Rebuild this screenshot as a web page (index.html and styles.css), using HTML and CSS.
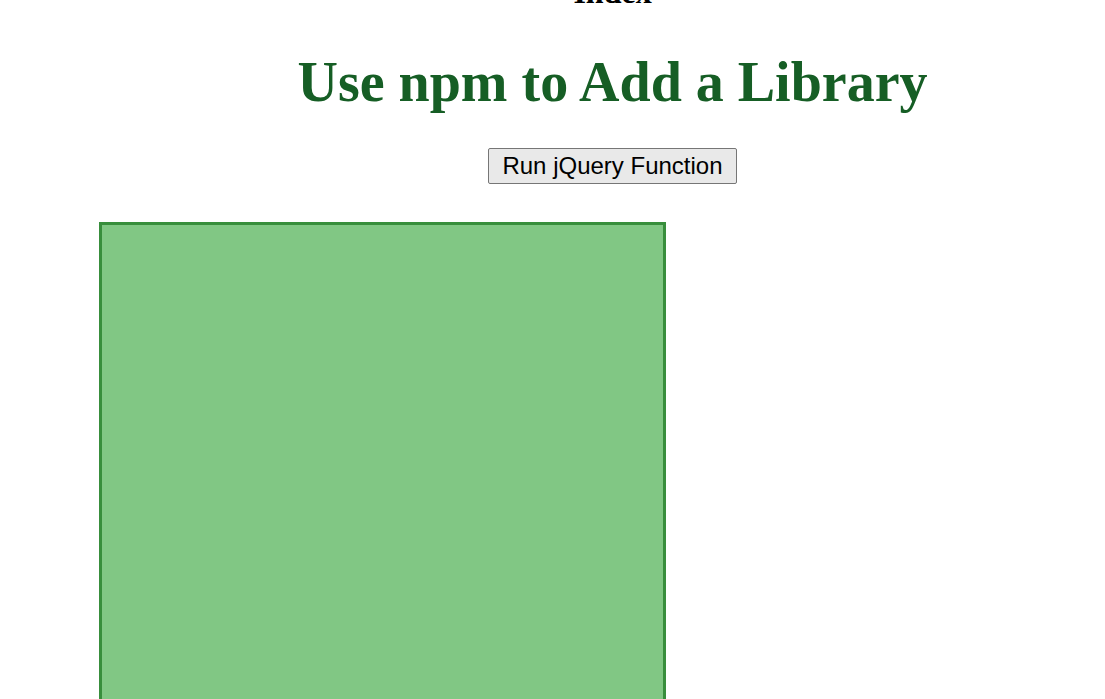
FILE: index.html
```html
<!DOCTYPE html>
<html>
<head>
<meta charset="utf-8">
<title>Index</title>
<link rel="stylesheet" href="styles.css">
</head>
<body>
<div class="page">
  <header class="head">
    <h2 class="title">Index</h2>
    <h1 class="heading">Use npm to Add a Library</h1>
    <button class="run" type="button">Run jQuery Function</button>
  </header>
  <div class="box"></div>
</div>
</body>
</html>
```
FILE: styles.css
```css
html, body {
  margin: 0;
  padding: 0;
  background: #ffffff;
  overflow: hidden;
}
body {
  font-family: "Liberation Serif", "Times New Roman", serif;
}
.page {
  margin-top: -26px;
}
.head {
  padding-left: 120px;
  text-align: center;
}
.title {
  margin: 0;
  font-size: 32px;
  font-weight: bold;
  line-height: 36px;
  color: #000;
}
.heading {
  margin: 40px 0 0;
  font-size: 56px;
  font-weight: bold;
  line-height: 64px;
  color: #165e25;
}
.run {
  margin-top: 34px;
  font-family: "Liberation Sans", Arial, sans-serif;
  font-size: 24px;
  line-height: 28px;
  padding: 3px 13px 3px;
  border: 1px solid #767676;
  border-radius: 2px;
  background: #e9e9e9;
  color: #000;
}
.box {
  margin: 38px 0 0 99px;
  width: 561px;
  height: 600px;
  background: #81c784;
  border: 3px solid #388e3c;
}
```
